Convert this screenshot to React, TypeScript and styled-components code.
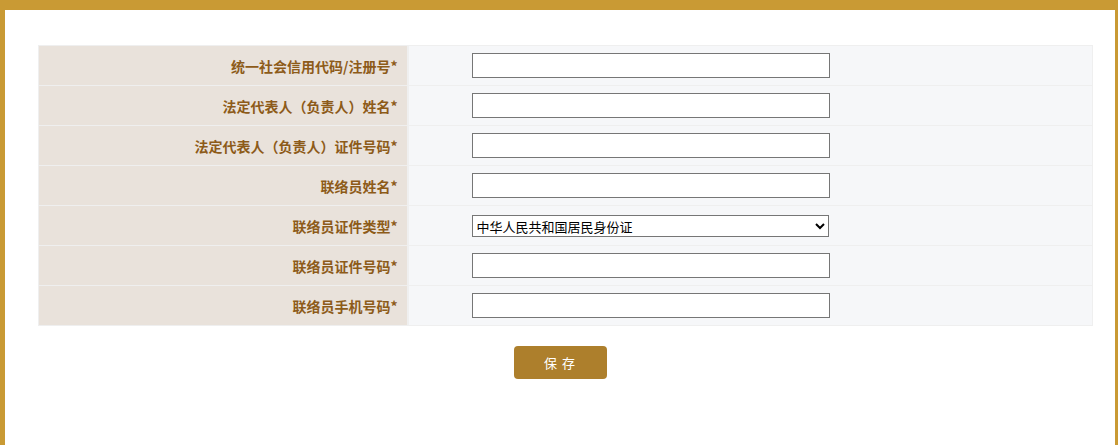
import React from 'react';
import styled, { createGlobalStyle } from 'styled-components';

const GlobalStyle = createGlobalStyle`
  html, body {
    margin: 0;
    padding: 0;
    background: #ffffff;
    font-family: "Liberation Sans", "Noto Sans CJK SC", sans-serif;
  }
`;

const Frame = styled.div`
  box-sizing: border-box;
  height: 445px;
  border-top: 10px solid #c99a34;
  border-left: 5px solid #c99a34;
  border-right: 3px solid #c99a34;
  padding: 35px 23px 0 33px;
`;

const FormTable = styled.table`
  width: 1055px;
  border-collapse: collapse;
`;

const Row = styled.tr`
  height: 40px;
`;

const Label = styled.td`
  box-sizing: border-box;
  width: 369px;
  background: #e9e2db;
  border: 1px solid #efefef;
  border-right: 2px solid #efefef;
  padding: 0 9px 0 0;
  text-align: right;
  font-family: "Noto Sans CJK SC", sans-serif;
  font-size: 14px;
  font-weight: 700;
  color: #8d5b19;
`;

const Value = styled.td`
  background: #f6f7f9;
  border: 1px solid #efefef;
  padding: 0 0 0 63px;
`;

const TextInput = styled.input`
  box-sizing: border-box;
  display: block;
  width: 358px;
  height: 25px;
  border: 1px solid #767676;
  background: #ffffff;
  margin: 0;
  padding: 0 4px;
`;

const Select = styled.select`
  box-sizing: border-box;
  display: block;
  width: 357px;
  height: 22px;
  border: 1px solid #767676;
  border-radius: 0;
  background: #ffffff;
  margin: 0;
  padding: 0;
  font-family: "Noto Sans CJK SC", sans-serif;
  font-size: 13px;
  color: #000000;
`;

const Actions = styled.div`
  display: flex;
  justify-content: center;
  padding: 20px 0 0 0;
  margin-left: -33px;
  margin-right: -23px;
`;

const SaveButton = styled.button`
  width: 93px;
  height: 33px;
  border: none;
  border-radius: 4px;
  background: #ad7f2c;
  color: #ffffff;
  font-family: "Noto Sans CJK SC", sans-serif;
  font-size: 13px;
  letter-spacing: 1px;
  cursor: pointer;
`;

const fields = [
  '统一社会信用代码/注册号*',
  '法定代表人（负责人）姓名*',
  '法定代表人（负责人）证件号码*',
  '联络员姓名*',
  '联络员证件类型*',
  '联络员证件号码*',
  '联络员手机号码*',
];

const App = () => {
  return (
    <>
      <GlobalStyle />
      <Frame>
        <FormTable>
          <tbody>
            {fields.map((label) => (
              <Row key={label}>
                <Label>{label}</Label>
                <Value>
                  {label === '联络员证件类型*' ? (
                    <Select defaultValue="sfz">
                      <option value="sfz">中华人民共和国居民身份证</option>
                    </Select>
                  ) : (
                    <TextInput type="text" />
                  )}
                </Value>
              </Row>
            ))}
          </tbody>
        </FormTable>
        <Actions>
          <SaveButton>保 存</SaveButton>
        </Actions>
      </Frame>
    </>
  );
};

export default App;
